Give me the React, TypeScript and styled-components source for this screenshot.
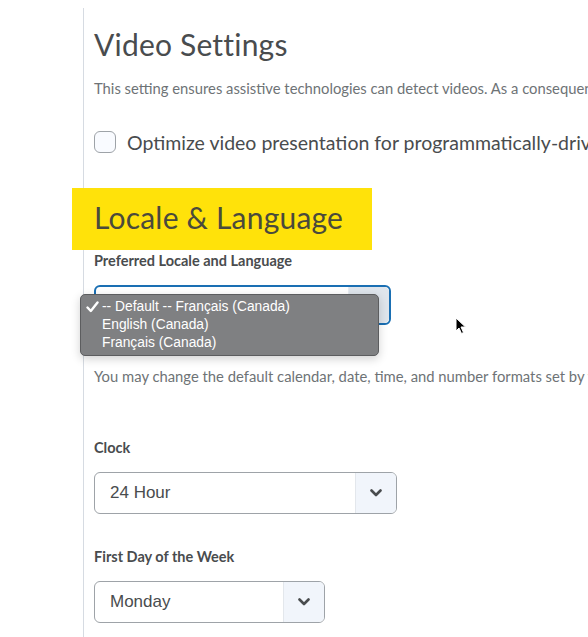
import React from "react";
import styled, { createGlobalStyle } from "styled-components";

const Global = createGlobalStyle`
  html, body { margin: 0; padding: 0; background: #fff; }
  body { width: 588px; height: 637px; overflow: hidden; font-family: Lato, "Noto Sans", sans-serif; }
`;

const Page = styled.div`
  margin: 8px 0 0 83px;
  padding: 18px 0 40px 10px;
  border-left: 1px solid #d6dbe2;
  min-height: 640px;
  box-sizing: border-box;
  white-space: nowrap;
`;

const Heading = styled.h2`
  margin: 0;
  font-weight: 400;
  font-size: 30px;
  line-height: 36px;
  color: #494c4e;
  letter-spacing: 0.2px;
`;

const Highlight = styled.h2`
  margin: 35px 0 0 -22px;
  width: 300px;
  box-sizing: border-box;
  padding: 11px 0 15px 22px;
  background: #ffe20a;
  font-weight: 400;
  font-size: 30px;
  line-height: 36px;
  color: #4a4a3c;
  letter-spacing: 0.2px;
`;

const Desc = styled.p<{ $top: number }>`
  margin: ${(p) => p.$top}px 0 0;
  font-size: 14.8px;
  line-height: 20px;
  color: #6e7376;
`;

const CheckRow = styled.label`
  display: flex;
  align-items: center;
  gap: 11px;
  margin-top: 33px;
  height: 22px;
  font-size: 19.5px;
  color: #494c4e;
`;

const Box = styled.span`
  width: 22px;
  height: 22px;
  box-sizing: border-box;
  border: 1px solid #9ea3a8;
  border-radius: 6px;
  background: #f9fbff;
  flex: none;
`;

const Label = styled.div<{ $top: number }>`
  margin-top: ${(p) => p.$top}px;
  font-weight: 700;
  font-size: 14.5px;
  line-height: 20px;
  color: #494c4e;
`;

const SelectBox = styled.div<{ $w: number; $h: number; $focus?: boolean }>`
  position: relative;
  margin-top: 14px;
  width: ${(p) => p.$w}px;
  height: ${(p) => p.$h}px;
  box-sizing: border-box;
  display: flex;
  border: ${(p) => (p.$focus ? "2px solid #1a6fb3" : "1px solid #9ea3a8")};
  border-radius: 6px;
  background: #fff;
`;

const Value = styled.div`
  flex: 1;
  display: flex;
  align-items: center;
  padding-left: 15px;
  font-family: "Liberation Sans", Arial, sans-serif;
  font-size: 17px;
  color: #494c4e;
`;

const Arrow = styled.div<{ $focus?: boolean }>`
  width: 40px;
  flex: none;
  display: flex;
  align-items: center;
  justify-content: center;
  background: ${(p) => (p.$focus ? "#dfe5ec" : "#f1f5fb")};
  border-left: 1px solid ${(p) => (p.$focus ? "#e8ecf1" : "#e3e7ec")};
  border-radius: 0 5px 5px 0;
`;

const Popup = styled.ul`
  position: absolute;
  left: -16px;
  top: 7px;
  width: 299px;
  height: 62px;
  box-sizing: border-box;
  margin: 0;
  padding: 3px 0 0;
  list-style: none;
  background: #7f8082;
  border: 1px solid #5c5d5f;
  border-radius: 5px;
  box-shadow: 0 3px 10px rgba(0, 0, 0, 0.18);
  z-index: 2;
`;

const Item = styled.li`
  position: relative;
  height: 18px;
  line-height: 18px;
  padding-left: 21px;
  font-family: "Liberation Sans", Arial, sans-serif;
  font-size: 13.8px;
  color: #fff;
`;

const Tick = styled.svg`
  position: absolute;
  left: 5px;
  top: 3px;
`;

const Cursor = styled.svg`
  position: absolute;
  left: 455px;
  top: 317px;
  z-index: 5;
`;

const Chevron = () => (
  <svg width="12" height="8" viewBox="0 0 12 8">
    <path d="M1.5 1.5 L6 6 L10.5 1.5" fill="none" stroke="#494c4e" strokeWidth="2.6" strokeLinecap="round" strokeLinejoin="round" />
  </svg>
);

export default function App() {
  return (
    <>
      <Global />
      <Page>
        <Heading>Video Settings</Heading>
        <Desc $top={16}>
          This setting ensures assistive technologies can detect videos. As a consequence, some videos may behave differently.
        </Desc>
        <CheckRow>
          <Box />
          Optimize video presentation for programmatically-driven players
        </CheckRow>
        <Highlight>Locale &amp; Language</Highlight>
        <Label $top={1}>Preferred Locale and Language</Label>
        <SelectBox $w={297} $h={40} $focus>
          <Value />
          <Arrow $focus />
          <Popup>
            <Item>
              <Tick width="13" height="12" viewBox="0 0 13 12">
                <path d="M1.5 6.5 L4.8 10 L11.5 1.5" fill="none" stroke="#fff" strokeWidth="2.4" strokeLinecap="round" strokeLinejoin="round" />
              </Tick>
              -- Default -- Français (Canada)
            </Item>
            <Item>English (Canada)</Item>
            <Item>Français (Canada)</Item>
          </Popup>
        </SelectBox>
        <Desc $top={41}>
          You may change the default calendar, date, time, and number formats set by your organization.
        </Desc>
        <Label $top={52}>Clock</Label>
        <SelectBox $w={303} $h={42}>
          <Value>24 Hour</Value>
          <Arrow>
            <Chevron />
          </Arrow>
        </SelectBox>
        <Label $top={33}>First Day of the Week</Label>
        <SelectBox $w={231} $h={42}>
          <Value>Monday</Value>
          <Arrow>
            <Chevron />
          </Arrow>
        </SelectBox>
      </Page>
      <Cursor width="12" height="18" viewBox="0 0 12 18">
        <path d="M1 1 L1 14 L4 11 L6.5 16.5 L8.5 15.5 L6 10 L10.5 10 Z" fill="#000" stroke="#fff" strokeWidth="1" strokeLinejoin="round" />
      </Cursor>
    </>
  );
}
